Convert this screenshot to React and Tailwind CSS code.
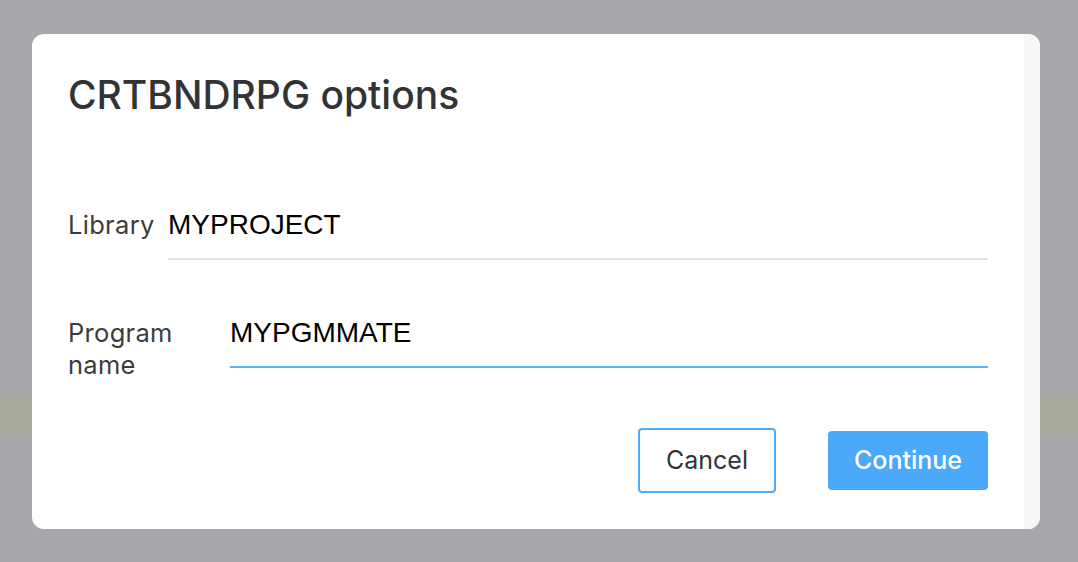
import { useState } from 'react';

const inter = { fontFamily: 'Inter, "Noto Sans", sans-serif' };

function Field({ label, value, labelWidth, focused }) {
  return (
    <div className="flex items-start">
      <label
        className="text-[25.5px] leading-[32px] tracking-[0.3px] text-[#3c3c3c] pt-[1px]"
        style={{ ...inter, width: labelWidth }}
      >
        {label}
      </label>
      <input
        readOnly
        value={value}
        className={
          'flex-1 h-[52px] pt-0 pb-[16px] px-0 text-[28px] text-black outline-none border-b-2 ' +
          (focused ? 'border-[#5cb2f2]' : 'border-[#e3e3e6]')
        }
        style={{ fontFamily: '"Liberation Sans", Arial, sans-serif' }}
      />
    </div>
  );
}

export default function App() {
  const [lib] = useState('MYPROJECT');
  const [pgm] = useState('MYPGMMATE');

  return (
    <div className="relative w-[1078px] h-[562px] bg-[#a7a6ab] overflow-hidden">
      {/* page behind the overlay */}
      <div className="pt-[398px]">
        <div className="h-[39px] bg-[#aaa99e]" />
      </div>

      <div className="absolute inset-0 pl-[32px] pr-[38px] pt-[34px] pb-[33px]">
        <div className="flex h-full bg-white rounded-[12px] overflow-hidden">
          <div className="flex-1 flex flex-col pl-[36px] pr-[36px]">
            <h2 className="mt-[38px] text-[39px] leading-[46px] font-medium text-[#333333]" style={inter}>
              CRTBNDRPG options
            </h2>

            <div className="mt-[90px] flex flex-col gap-[56px]">
              <Field label="Library" value={lib} labelWidth="100px" />
              <Field label="Program name" value={pgm} labelWidth="162px" focused />
            </div>

            <div className="mt-[47px] flex justify-end items-center gap-[52px]">
              <button
                type="button"
                className="w-[138px] h-[65px] rounded-[4px] border-2 border-[#4fa9f3] bg-white text-[25px] text-[#333333]"
                style={inter}
              >
                Cancel
              </button>
              <button
                type="button"
                className="w-[160px] h-[59px] rounded-[4px] bg-[#4aa9f8] text-[25px] font-medium text-white"
                style={inter}
              >
                Continue
              </button>
            </div>
          </div>
          <div className="w-[16px] bg-[#f7f7f7]" />
        </div>
      </div>
    </div>
  );
}
